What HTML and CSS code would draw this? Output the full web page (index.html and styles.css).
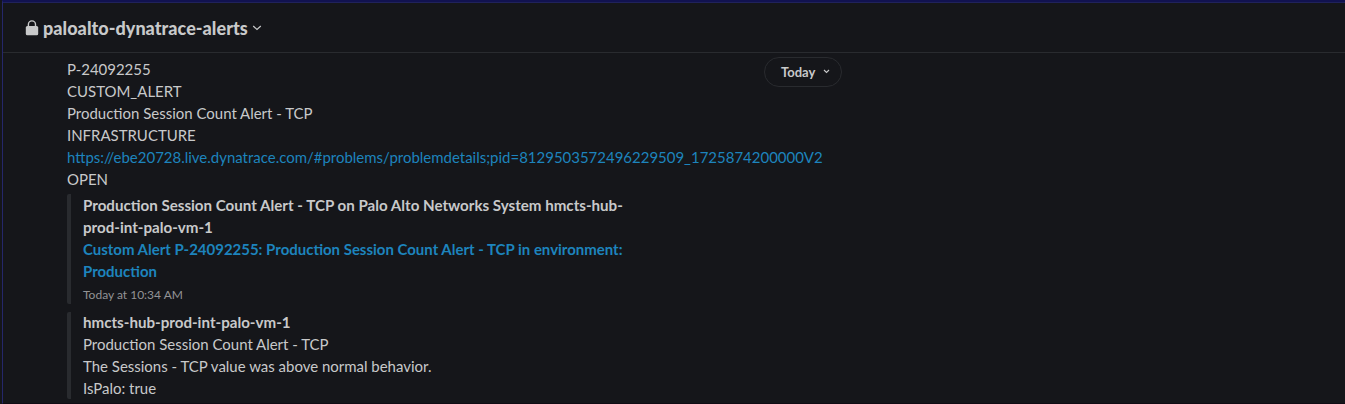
FILE: index.html
```html
<!DOCTYPE html>
<html lang="en"><head><meta charset="utf-8"><title>paloalto-dynatrace-alerts</title><link rel="stylesheet" href="styles.css"></head>
<body>
<div class="window">
<header class="header">
<svg class="lock" width="14" height="16" viewBox="0 0 14 16"><path d="M3.4 7V4.4a3.5 3.5 0 0 1 7.1 0V7" fill="none" stroke="currentColor" stroke-width="1.4"/><rect x="0.8" y="6.1" width="12.4" height="9.2" rx="1.5" fill="currentColor"/></svg>
<h1 class="channel">paloalto-dynatrace-alerts</h1>
<svg class="chevron" width="10" height="8" viewBox="0 0 10 8"><path d="M1.2 2 5 5.5 8.8 2" fill="none" stroke="currentColor" stroke-width="1.2"/></svg>
</header>
<main class="messages">
<button class="today">Today<svg width="7" height="6" viewBox="0 0 7 6"><path d="M1 1 3.5 3.5 6 1" fill="none" stroke="currentColor" stroke-width="1.1"/></svg></button>
<div class="line">P-24092255</div>
<div class="line">CUSTOM_ALERT</div>
<div class="line">Production Session Count Alert - TCP</div>
<div class="line">INFRASTRUCTURE</div>
<div class="line"><a class="link">https://ebe20728.live.dynatrace.com/#problems/problemdetails;pid=8129503572496229509_1725874200000V2</a></div>
<div class="line">OPEN</div>
<section class="attachment first">
<div class="line title">Production Session Count Alert - TCP on Palo Alto Networks System hmcts-hub-<br>prod-int-palo-vm-1</div>
<div class="line bold link">Custom Alert P-24092255: Production Session Count Alert - TCP in environment:<br>Production</div>
<div class="time">Today at 10:34 AM</div>
</section>
<section class="attachment second">
<div class="line title">hmcts-hub-prod-int-palo-vm-1</div>
<div class="line">Production Session Count Alert - TCP</div>
<div class="line">The Sessions - TCP value was above normal behavior.</div>
<div class="line">IsPalo: true</div>
</section>
</main>
</div>
</body></html>
```
FILE: styles.css
```css
*{box-sizing:border-box}
body{margin:0;background:#15161a;color:#c8c9ca;font:15px/22px Lato,sans-serif;overflow:hidden}
.window{height:404px;padding-top:1px;margin-left:2px;border-left:1px solid #25276a;border-top:2px solid #111250;border-bottom:1px solid #100c14;box-shadow:inset 0 1px #20225b}
.header{height:50px;border-bottom:1px solid #292b2f;display:flex;align-items:center;padding-left:22px}
.channel{margin:0 4px;font-size:18px;font-weight:900;letter-spacing:.04px;white-space:nowrap}
.messages{position:relative;padding:5px 0 0 64px}
.line{white-space:nowrap;font-size:14.98px}
.link{color:#1d84bd}
.bold{font-weight:700}
.title{font-weight:700;font-size:15.14px}
.today{position:absolute;left:761px;top:4px;width:78px;height:30px;border:1px solid #292b2f;border-radius:15px;background:#15161a;color:#c8c9ca;font:700 13px Lato,sans-serif;display:flex;align-items:center;gap:8px;padding:0 0 0 16px}
.attachment{border-left:4px solid #292b2f;border-radius:2px;padding-left:12px}
.first{margin-top:4px;height:110px}
.second{margin-top:8px;height:87px}
.second .line{line-height:22px}
.second .title{line-height:21px}
.time{font-size:12px;padding-top:2px;color:#929395}
```
